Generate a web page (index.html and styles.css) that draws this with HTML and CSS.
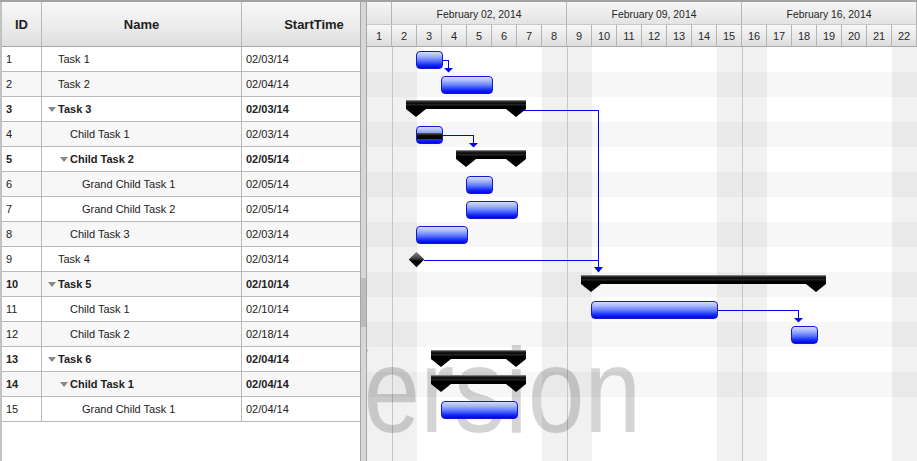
FILE: index.html
```html
<!DOCTYPE html>
<html lang="en">
<head>
<meta charset="utf-8">
<title>Project Gantt</title>
<link rel="stylesheet" href="styles.css">
</head>
<body>
<div class="gantt">
  <section class="grid-pane">
    <div class="grid-head">
      <div class="hcell c-id">ID</div>
      <div class="hcell c-name">Name</div>
      <div class="hcell c-start">StartTime</div>
    </div>
    <div class="grid-body">
      <div class="grow"><div class="cell c-id">1</div><div class="cell c-name lvl0"><span class="toggle"></span>Task 1</div><div class="cell c-start">02/03/14</div></div>
      <div class="grow alt"><div class="cell c-id">2</div><div class="cell c-name lvl0"><span class="toggle"></span>Task 2</div><div class="cell c-start">02/04/14</div></div>
      <div class="grow parent"><div class="cell c-id">3</div><div class="cell c-name lvl0"><span class="toggle open"></span>Task 3</div><div class="cell c-start">02/03/14</div></div>
      <div class="grow alt"><div class="cell c-id">4</div><div class="cell c-name lvl1"><span class="toggle"></span>Child Task 1</div><div class="cell c-start">02/03/14</div></div>
      <div class="grow parent"><div class="cell c-id">5</div><div class="cell c-name lvl1"><span class="toggle open"></span>Child Task 2</div><div class="cell c-start">02/05/14</div></div>
      <div class="grow alt"><div class="cell c-id">6</div><div class="cell c-name lvl2"><span class="toggle"></span>Grand Child Task 1</div><div class="cell c-start">02/05/14</div></div>
      <div class="grow"><div class="cell c-id">7</div><div class="cell c-name lvl2"><span class="toggle"></span>Grand Child Task 2</div><div class="cell c-start">02/05/14</div></div>
      <div class="grow alt"><div class="cell c-id">8</div><div class="cell c-name lvl1"><span class="toggle"></span>Child Task 3</div><div class="cell c-start">02/03/14</div></div>
      <div class="grow"><div class="cell c-id">9</div><div class="cell c-name lvl0"><span class="toggle"></span>Task 4</div><div class="cell c-start">02/03/14</div></div>
      <div class="grow alt parent"><div class="cell c-id">10</div><div class="cell c-name lvl0"><span class="toggle open"></span>Task 5</div><div class="cell c-start">02/10/14</div></div>
      <div class="grow"><div class="cell c-id">11</div><div class="cell c-name lvl1"><span class="toggle"></span>Child Task 1</div><div class="cell c-start">02/10/14</div></div>
      <div class="grow alt"><div class="cell c-id">12</div><div class="cell c-name lvl1"><span class="toggle"></span>Child Task 2</div><div class="cell c-start">02/18/14</div></div>
      <div class="grow parent"><div class="cell c-id">13</div><div class="cell c-name lvl0"><span class="toggle open"></span>Task 6</div><div class="cell c-start">02/04/14</div></div>
      <div class="grow alt parent"><div class="cell c-id">14</div><div class="cell c-name lvl1"><span class="toggle open"></span>Child Task 1</div><div class="cell c-start">02/04/14</div></div>
      <div class="grow"><div class="cell c-id">15</div><div class="cell c-name lvl2"><span class="toggle"></span>Grand Child Task 1</div><div class="cell c-start">02/04/14</div></div>
    </div>
  </section>

  <div class="splitter"><div class="thumb"></div></div>

  <section class="chart-pane">
    <div class="chart-head">
      <div class="weeks">
        <div class="week w-stub"></div>
        <div class="week">February 02, 2014</div>
        <div class="week">February 09, 2014</div>
        <div class="week">February 16, 2014</div>
      </div>
      <div class="days">
        <div class="day">1</div><div class="day">2</div><div class="day">3</div><div class="day">4</div><div class="day">5</div><div class="day">6</div><div class="day">7</div><div class="day">8</div><div class="day">9</div><div class="day">10</div><div class="day">11</div>
        <div class="day">12</div><div class="day">13</div><div class="day">14</div><div class="day">15</div><div class="day">16</div><div class="day">17</div><div class="day">18</div><div class="day">19</div><div class="day">20</div><div class="day">21</div><div class="day">22</div>
      </div>
    </div>

    <div class="chart-body">
      <!-- alternating row bands -->
      <div class="stripes">
        <div></div><div class="alt"></div><div></div><div class="alt"></div><div></div><div class="alt"></div><div></div><div class="alt"></div>
        <div></div><div class="alt"></div><div></div><div class="alt"></div><div></div><div class="alt"></div><div></div>
      </div>
      <!-- day columns: weekends shaded, week starts ruled -->
      <div class="cols">
        <div class="col we"></div><div class="col we wk"></div><div class="col"></div><div class="col"></div><div class="col"></div><div class="col"></div><div class="col"></div><div class="col we"></div>
        <div class="col we wk"></div><div class="col"></div><div class="col"></div><div class="col"></div><div class="col"></div><div class="col"></div><div class="col we"></div>
        <div class="col we wk"></div><div class="col"></div><div class="col"></div><div class="col"></div><div class="col"></div><div class="col"></div><div class="col we"></div>
      </div>

      <div class="watermark">Version</div>

      <!-- dependency links -->
      <svg class="links" width="550" height="414" viewBox="0 0 550 414">
        <g fill="none" stroke="#0000ff" stroke-width="1" shape-rendering="crispEdges">
          <path d="M75 13.5 H81.5 V21"/>
          <path d="M75 88.5 H106.5 V96"/>
          <path d="M150 63.5 H231.5 V220"/>
          <path d="M57 213.5 H231.5"/>
          <path d="M350 263.5 H431.5 V271"/>
        </g>
        <g fill="#0000ff">
          <polygon points="77,21 86,21 81.5,25.5"/>
          <polygon points="102,96 111,96 106.5,100.5"/>
          <polygon points="227,220 236,220 231.5,225.5"/>
          <polygon points="427,271 436,271 431.5,275.5"/>
        </g>
      </svg>

      <div class="tasks">
        <div class="trow"><div class="bar" style="left:49px;width:27px"></div></div>
        <div class="trow"><div class="bar" style="left:74px;width:52px"></div></div>
        <div class="trow"><div class="sum" style="left:39px;width:120px"></div></div>
        <div class="trow"><div class="bar" style="left:49px;width:27px"><div class="prog" style="width:100%"></div></div></div>
        <div class="trow"><div class="sum" style="left:89px;width:70px"></div></div>
        <div class="trow"><div class="bar" style="left:99px;width:27px"></div></div>
        <div class="trow"><div class="bar" style="left:99px;width:52px"></div></div>
        <div class="trow"><div class="bar" style="left:49px;width:52px"></div></div>
        <div class="trow"><div class="ms" style="left:44px"></div></div>
        <div class="trow"><div class="sum" style="left:214px;width:245px"></div></div>
        <div class="trow"><div class="bar" style="left:224px;width:127px"></div></div>
        <div class="trow"><div class="bar" style="left:424px;width:27px"></div></div>
        <div class="trow"><div class="sum" style="left:64px;width:95px"></div></div>
        <div class="trow"><div class="sum" style="left:64px;width:95px"></div></div>
        <div class="trow"><div class="bar" style="left:74px;width:77px"></div></div>
      </div>
    </div>
  </section>
</div>
</body>
</html>
```

FILE: styles.css
```css
* { box-sizing: border-box; }

html, body {
  margin: 0;
  padding: 0;
  background: #fff;
}

body {
  font-family: "Liberation Sans", Arial, sans-serif;
  color: #222;
}

.gantt {
  display: flex;
  width: 917px;
  height: 461px;
  border-top: 2px solid #a3a3a3;
  overflow: hidden;
}

/* ---------- left grid ---------- */
.grid-pane {
  width: 360px;
  flex: none;
  border-left: 2px solid #c2c2c2;
  display: flex;
  flex-direction: column;
}

.grid-head {
  display: grid;
  grid-template-columns: 40px 200px 118px;
  height: 45px;
  border-bottom: 1px solid #a9a9a9;
  background: linear-gradient(#f8f8f8, #ececec 55%, #dedede);
}

.hcell {
  display: flex;
  align-items: center;
  justify-content: center;
  font-size: 13px;
  font-weight: bold;
  color: #1e1e1e;
}

.hcell.c-id,
.hcell.c-name { border-right: 1px solid #b9b9b9; }

.hcell.c-start { padding-left: 26px; }

.grid-body { flex: 1; }

.grow {
  display: grid;
  grid-template-columns: 40px 200px 118px;
  height: 25px;
  font-size: 11px;
  color: #222;
}

.grow.alt { background: #f7f7f7; }
.grow.parent { font-weight: bold; }

.cell {
  display: flex;
  align-items: center;
  border-bottom: 1px solid #b8b8b8;
  white-space: nowrap;
}

.cell.c-id { padding-left: 4px; border-right: 1px solid #b8b8b8; }
.cell.c-name { border-right: 1px solid #b8b8b8; }
.cell.c-start { padding-left: 4px; }

.lvl0 { padding-left: 6px; }
.lvl1 { padding-left: 18px; }
.lvl2 { padding-left: 30px; }

.toggle {
  display: inline-block;
  flex: none;
  width: 10px;
  height: 5px;
}

.toggle.open {
  width: 0;
  height: 0;
  border-top: 5px solid #878787;
  border-left: 4px solid transparent;
  border-right: 4px solid transparent;
  margin-right: 2px;
}

/* ---------- splitter ---------- */
.splitter {
  width: 7px;
  flex: none;
  background: #d7d7d7;
  border-left: 1px solid #a6a6a6;
  border-right: 1px solid #a6a6a6;
}

.thumb {
  margin-top: 276px;
  height: 49px;
  background: #bcbcbc;
}

/* ---------- timeline ---------- */
.chart-pane {
  width: 550px;
  flex: none;
  display: flex;
  flex-direction: column;
}

.chart-head {
  height: 45px;
  border-bottom: 1px solid #a9a9a9;
}

.weeks {
  display: flex;
  height: 23px;
  border-bottom: 1px solid #c9c9c9;
  background: linear-gradient(#f5f5f5, #ebebeb 60%, #e3e3e3);
}

.week {
  width: 175px;
  flex: none;
  display: flex;
  align-items: center;
  justify-content: center;
  font-size: 10.4px;
  color: #262626;
  border-right: 1px solid #b5b5b5;
  padding-top: 2px;
}

.week.w-stub { width: 25px; }

.days {
  display: flex;
  height: 21px;
  background: linear-gradient(#f7f7f7, #eaeaea 55%, #dcdcdc);
}

.day {
  width: 25px;
  flex: none;
  display: flex;
  align-items: center;
  justify-content: center;
  font-size: 11px;
  color: #2a2a2a;
  border-right: 1px solid #b5b5b5;
  padding-top: 1px;
}

.chart-body {
  flex: 1;
  display: grid;
  overflow: hidden;
}

.chart-body > * {
  grid-area: 1 / 1;
  align-self: start;
  justify-self: start;
}

.stripes { width: 550px; }
.stripes > div { height: 25px; }
.stripes > .alt { background: #f7f7f7; }

.cols {
  display: flex;
  height: 414px;
}

.col { width: 25px; flex: none; }
.col.we { background: rgba(0, 0, 0, 0.055); }
.col.wk { border-left: 1px solid #c6c6c6; }

.watermark {
  font-size: 120px;
  line-height: 120px;
  color: rgba(0, 0, 0, 0.17);
  white-space: nowrap;
  margin: 283px 0 0 -66px;
  transform: scaleX(0.85);
  transform-origin: 0 0;
}

.links {
  display: block;
  position: relative;
}

.tasks { width: 550px; position: relative; }

.trow {
  position: relative;
  height: 25px;
}

.bar {
  position: absolute;
  top: 4px;
  height: 18px;
  border: 1px solid #1616d8;
  border-radius: 4px;
  background: linear-gradient(#d4dcfd 0%, #a6b6fc 25%, #5a76fb 55%, #1a33f7 78%, #0000ee 100%);
  overflow: hidden;
}

.bar .prog {
  height: 6px;
  margin-top: 6px;
  background: linear-gradient(#5c5c5c, #0a0a0a 45%, #000);
}

.sum {
  position: absolute;
  top: 3px;
  height: 9px;
  background: linear-gradient(#a8a8a8 0, #3c3c3c 14%, #050505 34%, #262626 52%, #000 72%, #000 100%);
}

.sum::before,
.sum::after {
  content: "";
  position: absolute;
  top: 9px;
  width: 20px;
  height: 8px;
  background: #000;
  clip-path: polygon(0 0, 100% 0, 50% 100%);
}

.sum::before { left: 0; }
.sum::after { right: 0; }

.ms {
  position: absolute;
  top: 7px;
  width: 11px;
  height: 11px;
  transform: rotate(45deg);
  background: linear-gradient(135deg, #8e8e8e 0%, #3a3a3a 45%, #000 60%);
}
```
